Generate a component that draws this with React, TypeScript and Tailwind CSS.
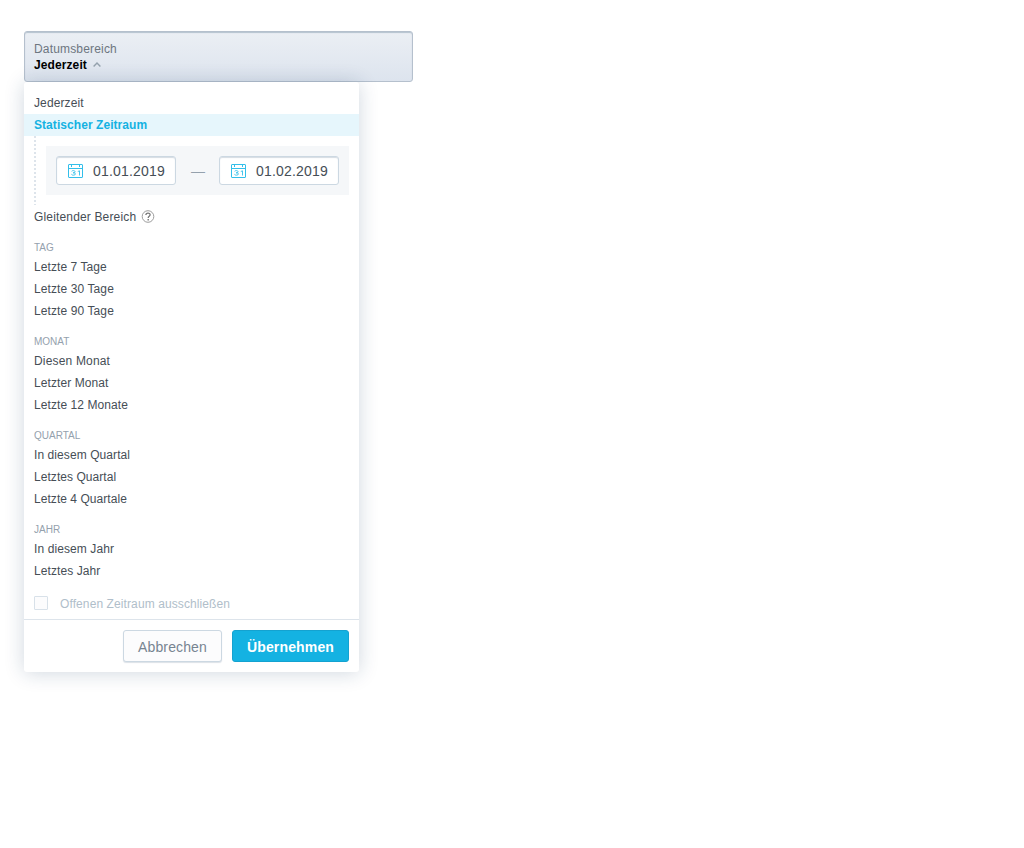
import React from "react";

const groups = [
  {
    title: "TAG",
    items: [
      { label: "Letzte 7 Tage", spacing: "tracking-[0.08px]" },
      { label: "Letzte 30 Tage", spacing: "tracking-[0.1px]" },
      { label: "Letzte 90 Tage", spacing: "tracking-[0.1px]" },
    ],
  },
  {
    title: "MONAT",
    items: [
      { label: "Diesen Monat", spacing: "tracking-[0.17px]" },
      { label: "Letzter Monat", spacing: "tracking-[0.08px]" },
      { label: "Letzte 12 Monate", spacing: "tracking-[0.08px]" },
    ],
  },
  {
    title: "QUARTAL",
    items: [
      { label: "In diesem Quartal", spacing: "tracking-[0.08px]" },
      { label: "Letztes Quartal", spacing: "tracking-[0.05px]" },
      { label: "Letzte 4 Quartale", spacing: "tracking-[0.05px]" },
    ],
  },
  {
    title: "JAHR",
    items: [
      { label: "In diesem Jahr", spacing: "tracking-[0.1px]" },
      { label: "Letztes Jahr", spacing: "tracking-[0.08px]" },
    ],
  },
];

function CalendarIcon() {
  return (
    <svg width="15" height="14" viewBox="0 0 15 14" fill="none" stroke="#33bfea" className="shrink-0">
      <rect x="0.5" y="0.5" width="14" height="13" rx="0.5" />
      <path d="M0.5 4.5H14.5M3.5 0.5V3M11.5 0.5V3" />
      <path d="M3.6 7.3C4.2 6.3 7.1 6.3 7.1 7.7C7.1 8.6 6.3 8.8 5 8.8C6.3 8.8 7.4 9 7.4 10C7.4 11.5 4 11.5 3.4 10.3M9.8 7.5L11.5 6.8V11.5" strokeWidth="0.9" />
    </svg>
  );
}

function DateInput({ value }: { value: string }) {
  return (
    <div className="flex h-[29px] w-[120px] items-center rounded-[3px] border border-[#ccd8e2] bg-white pl-[11px] shadow-[inset_0_1px_1px_#d5dce3]">
      <CalendarIcon />
      <span className="ml-[10px] text-[14px] leading-5 tracking-[0.2px] text-[#464e56]">{value}</span>
    </div>
  );
}

function Item({ children }: { children: React.ReactNode }) {
  return <div className="flex h-[22px] items-center px-[10px]">{children}</div>;
}

export default function App() {
  return (
    <main className="h-[848px] w-[1024px] bg-white pt-[31px] pl-6 font-['Liberation_Sans',Arial,sans-serif] text-[12px] leading-4 text-[#464e56]">
      <button className="block h-[51px] w-[389px] rounded-[3px] border border-[#b5c0cd] bg-gradient-to-b from-[#ebeff4] to-[#dde4ee] px-[9px] text-left shadow-[inset_0_1px_1px_#b5c3cf]">
        <span className="block tracking-[0.17px] text-[#6d7680]">Datumsbereich</span>
        <span className="flex items-center font-bold tracking-[0.1px] text-black">
          Jederzeit
          <svg width="8" height="5" viewBox="0 0 8 5" fill="none" stroke="#94a1ad" strokeWidth="1.4" className="ml-[6px]">
            <path d="M0.6 4.5L4 1.1L7.4 4.5" />
          </svg>
        </span>
      </button>
      <section className="relative h-[590px] w-[335px] rounded-[3px] bg-white pt-[10px] shadow-[0_1px_20px_rgba(20,56,93,0.2)]">
        <Item><span className="tracking-[0.12px]">Jederzeit</span></Item>
        <div className="flex h-[22px] items-center bg-[#e6f6fc] px-[10px] font-bold tracking-[0.06px] text-[#14b2e2]">Statischer Zeitraum</div>
        <div className="mb-px ml-[10px] flex h-[69px] pr-[10px]">
          <div className="w-[2px] shrink-0 bg-[repeating-linear-gradient(to_bottom,#dde4eb_0px,#dde4eb_2px,#ffffff_2px,#ffffff_4px)]" />
          <div className="mt-[10px] ml-[10px] flex h-[49px] grow items-center justify-between bg-[#f5f7f9] px-[10px]">
            <DateInput value="01.01.2019" />
            <span className="pl-px text-[14px] leading-5 text-[#94a1ad]">—</span>
            <DateInput value="01.02.2019" />
          </div>
        </div>
        <Item>
          <span className="tracking-[0.16px]">Gleitender Bereich</span>
          <svg width="14" height="14" viewBox="0 0 14 14" fill="none" className="ml-[5px]">
            <circle cx="7" cy="6.5" r="5.8" stroke="#929292" strokeWidth="0.9" />
            <path d="M4.9 5C4.9 2.5 9.1 2.5 9.1 4.8C9.1 6.4 7.2 6.2 7.2 8" stroke="#777" strokeWidth="1.3" />
            <path d="M7.2 9V10.5" stroke="#777" strokeWidth="1.4" />
          </svg>
        </Item>
        {groups.map((g) => (
          <div key={g.title}>
            <div className="h-7 px-[10px] pt-[11px] text-[10px] leading-[17px] text-[#94a1ad]">{g.title}</div>
            {g.items.map((item) => (
              <Item key={item.label}><span className={item.spacing}>{item.label}</span></Item>
            ))}
          </div>
        ))}
        <div className="flex h-[38px] items-center border-b border-[#dde4eb] pt-[6px] pl-[10px] text-[#b0beca]">
          <span className="-mt-px size-[14px] rounded-[1px] border border-[#d8e1e9] bg-[#fcfcfd]" />
          <span className="ml-3 tracking-[0.1px]">Offenen Zeitraum ausschließen</span>
        </div>
        <div className="flex justify-end gap-[10px] pt-[10px] pr-[10px] text-[14px] leading-5">
          <button className="h-8 w-[99px] rounded-[3px] border border-[#ccd8e2] bg-[#fcfcfd] pt-[2px] tracking-[0.14px] text-[#778491] shadow-[0_1px_1px_rgba(20,56,93,0.15)]">Abbrechen</button>
          <button className="h-8 w-[117px] rounded-[3px] border border-[#14a2d0] bg-[#14b2e2] pt-[2px] font-bold tracking-[0.15px] text-white">Übernehmen</button>
        </div>
      </section>
    </main>
  );
}
